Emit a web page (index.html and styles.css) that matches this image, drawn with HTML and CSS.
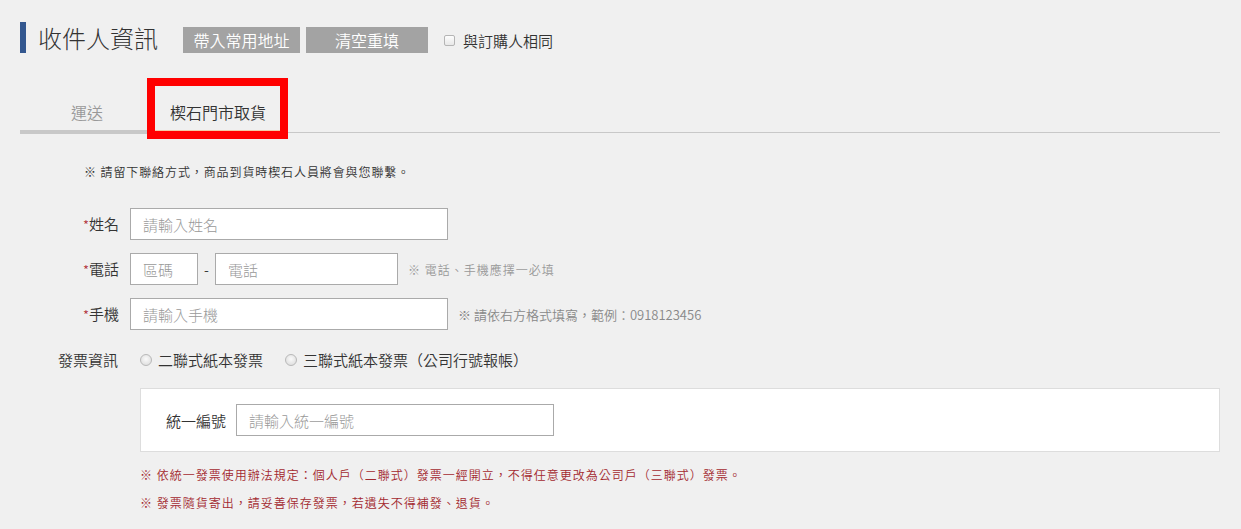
FILE: index.html
```html
<!DOCTYPE html>
<html lang="zh-Hant">
<head>
<meta charset="utf-8">
<title>收件人資訊</title>
<link rel="stylesheet" href="styles.css">
</head>
<body>
<div class="page">
  <div class="head">
    <span class="head-bar"></span>
    <h2 class="head-title">收件人資訊</h2>
    <button class="btn btn-addr" type="button">帶入常用地址</button>
    <button class="btn btn-clear" type="button">清空重填</button>
    <label class="same">
      <span class="checkbox"></span>
      <span>與訂購人相同</span>
    </label>
  </div>

  <div class="tabs">
    <div class="tab tab-ship">運送</div>
    <div class="tab tab-active">楔石門市取貨<span class="highlight"></span></div>
  </div>

  <div class="form">
    <p class="notice">※ 請留下聯絡方式，商品到貨時楔石人員將會與您聯繫。</p>

    <div class="row">
      <label class="label"><span class="req">*</span>姓名</label>
      <input class="input input-wide" type="text" placeholder="請輸入姓名">
    </div>

    <div class="row">
      <label class="label"><span class="req">*</span>電話</label>
      <input class="input input-area" type="text" placeholder="區碼">
      <span class="dash">-</span>
      <input class="input input-phone" type="text" placeholder="電話">
      <span class="hint">※ 電話、手機應擇一必填</span>
    </div>

    <div class="row">
      <label class="label"><span class="req">*</span>手機</label>
      <input class="input input-wide" type="text" placeholder="請輸入手機">
      <span class="hint hint-dark">※ 請依右方格式填寫，範例：0918123456</span>
    </div>

    <div class="invoice-row">
      <span class="label">發票資訊</span>
      <div class="options">
        <label class="option"><span class="radio"></span>二聯式紙本發票</label>
        <label class="option"><span class="radio"></span>三聯式紙本發票（公司行號報帳）</label>
      </div>
    </div>

    <div class="tax-box">
      <span class="tax-label">統一編號</span>
      <input class="input input-wide" type="text" placeholder="請輸入統一編號">
    </div>

    <p class="warn warn-first">※ 依統一發票使用辦法規定：個人戶（二聯式）發票一經開立，不得任意更改為公司戶（三聯式）發票。</p>
    <p class="warn warn-second">※ 發票隨貨寄出，請妥善保存發票，若遺失不得補發、退貨。</p>
  </div>
</div>
</body>
</html>
```

FILE: styles.css
```css
* {
  box-sizing: border-box;
}

html, body {
  margin: 0;
  padding: 0;
  background: #f0f0f0;
}

body {
  font-family: "Noto Sans CJK TC", "Liberation Sans", sans-serif;
  font-weight: 350;
  color: #333;
  height: 529px;
  overflow: hidden;
}

.page {
  width: 1200px;
  margin-left: 20px;
  padding-top: 22px;
}

/* header */
.head {
  display: flex;
  align-items: flex-end;
  height: 31px;
}

.head-bar {
  width: 6px;
  height: 31px;
  background: #33578f;
}

.head-title {
  margin: 0 0 0 12px;
  font-size: 24px;
  font-weight: 300;
  line-height: 31px;
  height: 31px;
  color: #333;
}

.btn {
  height: 26px;
  border: 0;
  background: #a3a3a3;
  color: #fff;
  font-family: inherit;
  font-weight: 350;
  font-size: 16px;
  line-height: 26px;
  padding: 0 10px;
  margin: 0;
}

.btn-addr {
  margin-left: 25px;
  width: 117px;
}

.btn-clear {
  margin-left: 6px;
  width: 122px;
}

.same {
  display: flex;
  align-items: center;
  height: 26px;
  margin-left: 16px;
  font-size: 15px;
  color: #333;
}

.checkbox {
  width: 11px;
  height: 11px;
  border: 1px solid #b5b5b5;
  border-radius: 2px;
  background: linear-gradient(#fdfdfd, #e8e8e8);
  margin-right: 8px;
}

/* tabs */
.tabs {
  display: flex;
  align-items: flex-end;
  margin-top: 41px;
  border-bottom: 1px solid #c8c8c8;
  height: 39px;
}

.tab {
  position: relative;
  height: 42px;
  padding: 10px 0 8px;
  font-size: 16px;
  line-height: 20px;
  text-align: center;
  margin-bottom: -2px;
  color: #999;
  width: 128px;
  border-bottom: 4px solid #c8c8c8;
}

.tab-ship {
  padding-left: 6px;
}

.tab-active {
  width: 140px;
  color: #333;
  border-bottom: 2px solid #f3c9a6;
  height: 40px;
  margin-bottom: 0;
}

.highlight {
  position: absolute;
  left: -1px;
  top: -14px;
  width: 141px;
  height: 61px;
  border: 8px solid #ff0000;
}

/* form */
.form {
  display: flex;
  flex-direction: column;
}

.notice {
  margin: 29px 0 0 64px;
  font-size: 12px;
  letter-spacing: 0.9px;
  line-height: 20px;
  color: #333;
}

.row {
  display: flex;
  align-items: center;
  height: 32px;
  margin-top: 13px;
}

.notice + .row {
  margin-top: 26px;
}

.label {
  width: 100px;
  text-align: right;
  font-size: 15px;
  line-height: 20px;
  color: #333;
  margin-right: 10px;
  padding-right: 1px;
}

.req {
  color: #b0333b;
  font-size: 13px;
}

.input {
  height: 32px;
  border: 1px solid #aaa;
  background: #fff;
  padding: 0 12px;
  font-family: inherit;
  font-weight: 300;
  font-size: 15px;
  color: #333;
  outline: none;
}

.input::placeholder {
  color: #999;
}

.input-wide {
  width: 318px;
}

.input-area {
  width: 68px;
}

.input-phone {
  width: 183px;
}

.dash {
  width: 17px;
  text-align: center;
  font-size: 14px;
}

.hint {
  margin-left: 10px;
  font-size: 12px;
  letter-spacing: 1px;
  color: #999;
}

.hint-dark {
  font-size: 13px;
  letter-spacing: 0;
  color: #888;
}

/* invoice */
.invoice-row {
  display: flex;
  align-items: center;
  margin-top: 20px;
  height: 20px;
}

.invoice-row .label {
  margin-right: 20px;
  padding-right: 2px;
}

.options {
  display: flex;
  align-items: center;
  gap: 22px;
}

.option {
  display: flex;
  align-items: center;
  font-size: 15px;
  line-height: 20px;
  color: #333;
}

.radio {
  width: 12px;
  height: 12px;
  border: 1px solid #b8b8b8;
  border-radius: 50%;
  background: radial-gradient(circle at 50% 40%, #fafafa, #d8d8d8);
  margin-right: 6px;
}

.tax-box {
  display: flex;
  align-items: center;
  margin: 18px 0 0 120px;
  height: 64px;
  border: 1px solid #ddd;
  background: #fff;
  padding: 0 0 0 25px;
}

.tax-label {
  font-size: 15px;
  color: #333;
  margin-right: 10px;
}

.warn {
  margin: 13px 0 0 120px;
  font-size: 12px;
  letter-spacing: 1px;
  line-height: 20px;
  color: #a3292f;
}

.warn-second {
  margin-top: 8px;
}
```
